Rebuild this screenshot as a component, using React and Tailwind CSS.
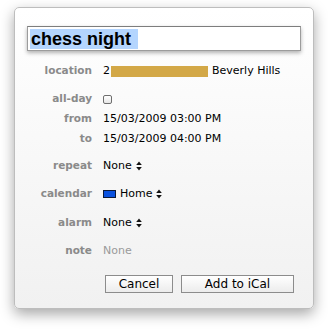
import React from "react";

const UpDown = () => (
  <svg width="6" height="10" viewBox="0 0 6 10" className="ml-[4px]">
    <path d="M3 0.5 L5.8 4 L0.2 4 Z" fill="#111" />
    <path d="M3 9.5 L5.8 6 L0.2 6 Z" fill="#111" />
  </svg>
);

const Row = ({ label, children, className = "" }) => (
  <div className={`flex items-center h-[20px] ${className}`}>
    <div className="w-[65px] shrink-0 text-right font-bold text-[10.5px] text-[#8a8a8a]">
      {label}
    </div>
    <div className="ml-[11px] flex items-center text-[11px] text-black">{children}</div>
  </div>
);

export default function App() {
  return (
    <div
      className="w-[328px] h-[329px] bg-white pt-[7px] pl-[14px]"
      style={{ fontFamily: '"DejaVu Sans", sans-serif' }}
    >
      <div className="w-[300px] h-[302px] rounded-[5px] border border-[#bdbdbd] bg-gradient-to-b from-[#ffffff] to-[#f1f1f1] shadow-[0_5px_14px_rgba(0,0,0,0.35)] px-[12px] pt-[18px]">
        {/* title field */}
        <div className="h-[25px] border border-[#9c9c9c] border-t-[#7d7d7d] bg-white shadow-[0_2px_4px_rgba(0,0,0,0.3)] flex items-center pl-[2px]">
          <span
            className="bg-[#b4d5fe] h-[20px] leading-[20px] pl-[1px] pr-[7px] font-bold text-[18px] text-black"
            style={{ fontFamily: '"Liberation Sans", Arial, sans-serif' }}
          >
            chess night
          </span>
        </div>

        <Row label="location" className="mt-[10px]">
          <span>2</span>
          <span className="inline-block w-[97px] h-[11px] bg-[#d3a847] ml-[1px]" />
          <span className="ml-[4px]">Beverly Hills</span>
        </Row>
        <Row label="all-day" className="mt-[8px]">
          <span className="inline-block w-[9px] h-[9px] rounded-[2px] border border-[#6e6e6e] bg-gradient-to-b from-white to-[#e6e6e6]" />
        </Row>
        <Row label="from">15/03/2009 03:00 PM</Row>
        <Row label="to">15/03/2009 04:00 PM</Row>
        <Row label="repeat" className="mt-[7px]">
          None
          <UpDown />
        </Row>
        <Row label="calendar" className="mt-[8px]">
          <span className="inline-block w-[13px] h-[8px] bg-[#0a52e0] border border-[#0b1a3a] mr-[4px]" />
          Home
          <UpDown />
        </Row>
        <Row label="alarm" className="mt-[9px]">
          None
          <UpDown />
        </Row>
        <Row label="note" className="mt-[8px]">
          <span className="text-[#9a9a9a]">None</span>
        </Row>

        <div className="flex mt-[14px] pl-[78px] gap-[8px]">
          <button className="w-[68px] h-[18px] border border-[#8c8c8c] bg-gradient-to-b from-white to-[#ececec] text-[12px] leading-[16px] text-black">
            Cancel
          </button>
          <button className="w-[113px] h-[18px] border border-[#8c8c8c] bg-gradient-to-b from-white to-[#ececec] text-[12px] leading-[16px] text-black">
            Add to iCal
          </button>
        </div>
      </div>
    </div>
  );
}
